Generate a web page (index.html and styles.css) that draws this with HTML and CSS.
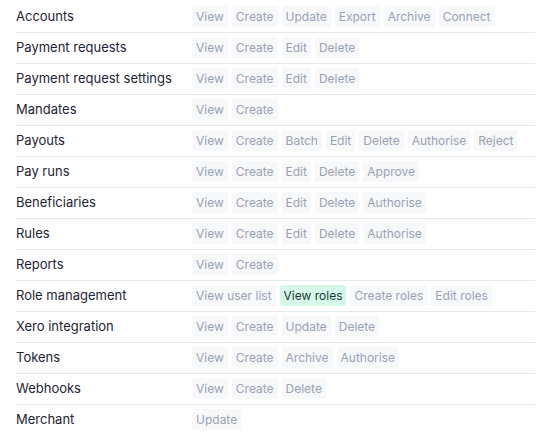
FILE: index.html
```html
<!DOCTYPE html>
<html>
<head>
<meta charset="utf-8">
<link rel="stylesheet" href="styles.css">
</head>
<body>
<div class="perms">
  <div class="row"><div class="label">Accounts</div><div class="chips"><span class="chip">View</span><span class="chip">Create</span><span class="chip">Update</span><span class="chip">Export</span><span class="chip">Archive</span><span class="chip">Connect</span></div></div>
  <div class="row"><div class="label">Payment requests</div><div class="chips"><span class="chip">View</span><span class="chip">Create</span><span class="chip">Edit</span><span class="chip">Delete</span></div></div>
  <div class="row"><div class="label">Payment request settings</div><div class="chips"><span class="chip">View</span><span class="chip">Create</span><span class="chip">Edit</span><span class="chip">Delete</span></div></div>
  <div class="row"><div class="label">Mandates</div><div class="chips"><span class="chip">View</span><span class="chip">Create</span></div></div>
  <div class="row"><div class="label">Payouts</div><div class="chips"><span class="chip">View</span><span class="chip">Create</span><span class="chip">Batch</span><span class="chip">Edit</span><span class="chip">Delete</span><span class="chip">Authorise</span><span class="chip">Reject</span></div></div>
  <div class="row"><div class="label">Pay runs</div><div class="chips"><span class="chip">View</span><span class="chip">Create</span><span class="chip">Edit</span><span class="chip">Delete</span><span class="chip">Approve</span></div></div>
  <div class="row"><div class="label">Beneficiaries</div><div class="chips"><span class="chip">View</span><span class="chip">Create</span><span class="chip">Edit</span><span class="chip">Delete</span><span class="chip">Authorise</span></div></div>
  <div class="row"><div class="label">Rules</div><div class="chips"><span class="chip">View</span><span class="chip">Create</span><span class="chip">Edit</span><span class="chip">Delete</span><span class="chip">Authorise</span></div></div>
  <div class="row"><div class="label">Reports</div><div class="chips"><span class="chip">View</span><span class="chip">Create</span></div></div>
  <div class="row"><div class="label">Role management</div><div class="chips"><span class="chip">View user list</span><span class="chip active">View roles</span><span class="chip">Create roles</span><span class="chip">Edit roles</span></div></div>
  <div class="row"><div class="label">Xero integration</div><div class="chips"><span class="chip">View</span><span class="chip">Create</span><span class="chip">Update</span><span class="chip">Delete</span></div></div>
  <div class="row"><div class="label">Tokens</div><div class="chips"><span class="chip">View</span><span class="chip">Create</span><span class="chip">Archive</span><span class="chip">Authorise</span></div></div>
  <div class="row"><div class="label">Webhooks</div><div class="chips"><span class="chip">View</span><span class="chip">Create</span><span class="chip">Delete</span></div></div>
  <div class="row"><div class="label">Merchant</div><div class="chips"><span class="chip">Update</span></div></div>
</div>
</body>
</html>
```
FILE: styles.css
```css
html, body {
  margin: 0;
  padding: 0;
  background: #ffffff;
}
body {
  font-family: Inter, "Noto Sans", sans-serif;
  font-size: 13px;
  color: #1d2433;
}
.perms {
  width: 520px;
  margin-left: 15px;
  padding-top: 2px;
}
.row {
  display: grid;
  grid-template-columns: 177px 1fr;
  align-items: center;
  padding: 4px 0 5px;
  border-bottom: 1px solid #e4e7ec;
}
.row:last-child {
  border-bottom: none;
}
.label {
  padding-left: 1px;
  line-height: 21px;
}
.chips {
  display: flex;
  gap: 4px;
}
.chip {
  display: inline-block;
  height: 21px;
  line-height: 21px;
  font-size: 12px;
  padding: 0 4px;
  border-radius: 3px;
  background: #f7f8fa;
  color: #98a2b6;
}
.chip.active {
  background: #d6f8e9;
  color: #233838;
}
```
